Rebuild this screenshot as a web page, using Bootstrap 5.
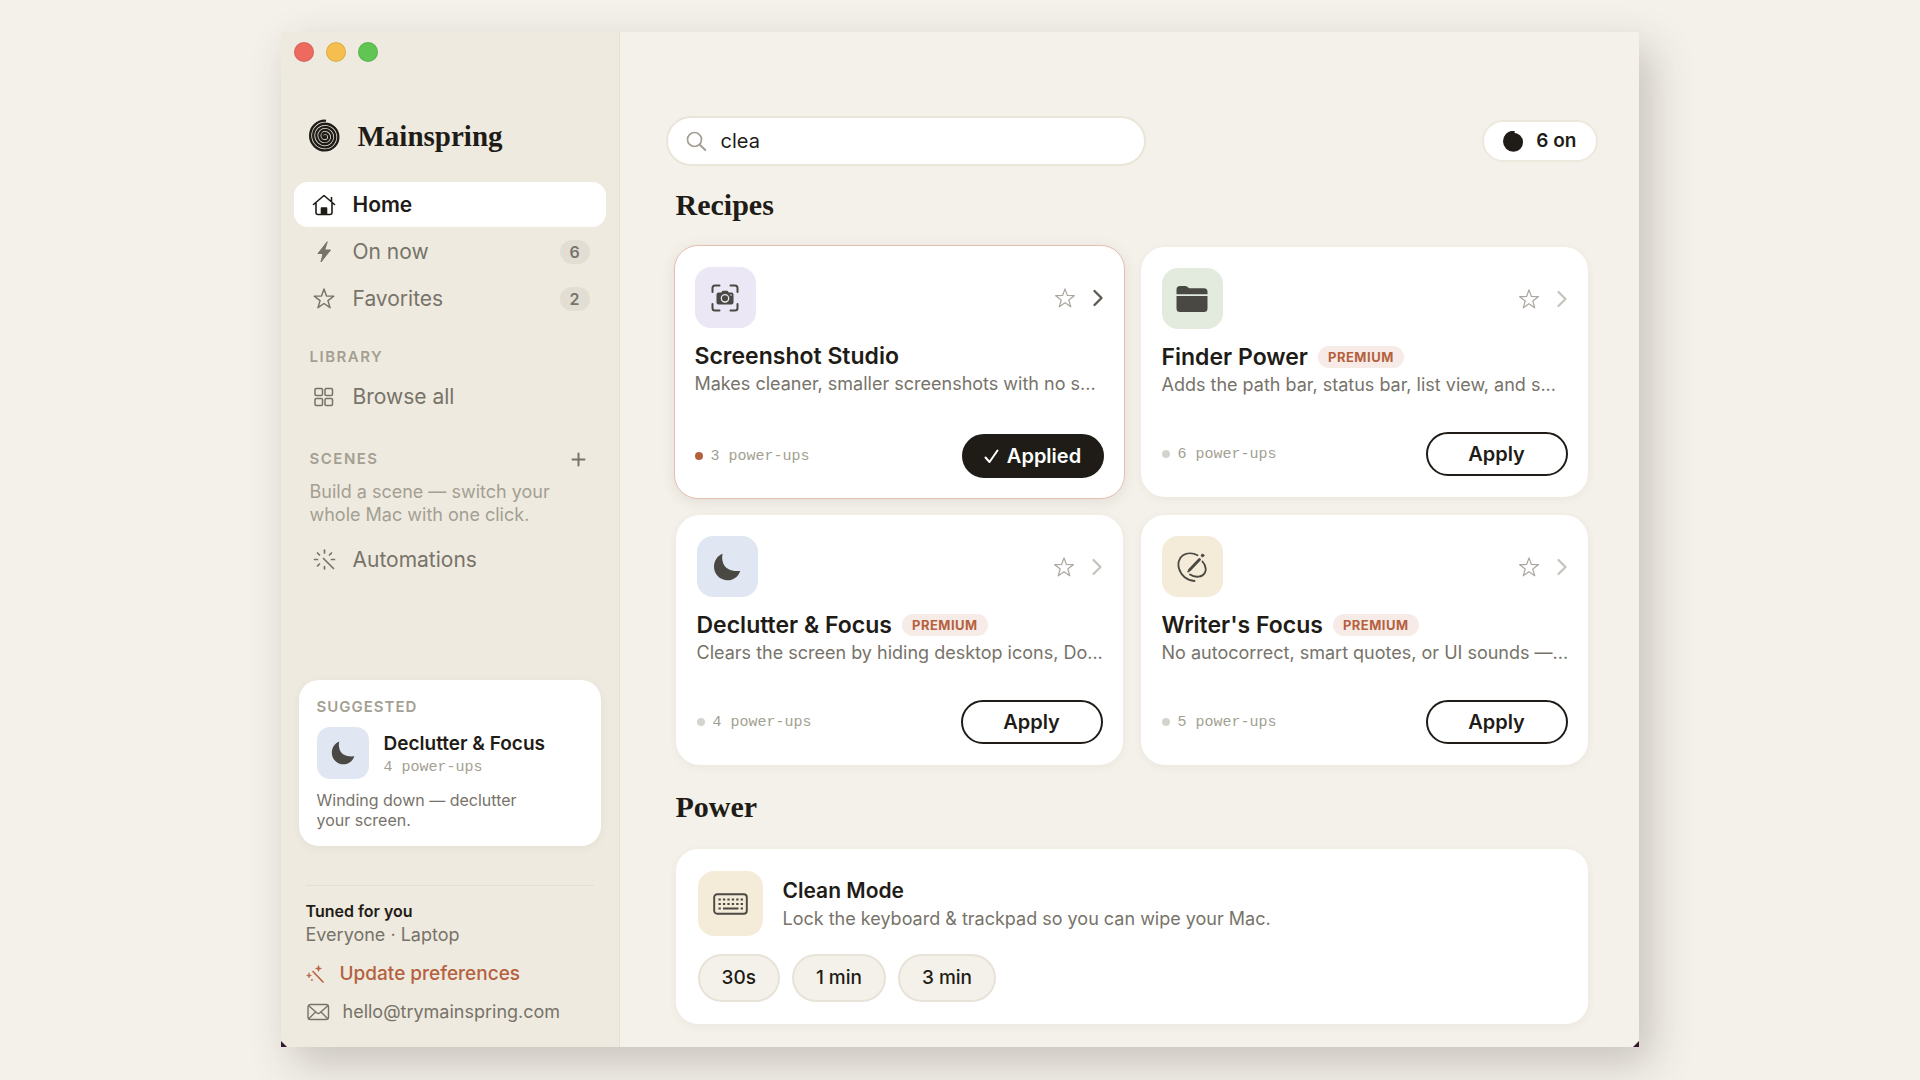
<!DOCTYPE html>
<html lang="en">
<head>
<meta charset="utf-8">
<meta name="viewport" content="width=device-width, initial-scale=1">
<title>Mainspring</title>
<link href="https://cdn.jsdelivr.net/npm/bootstrap@5.3.0/dist/css/bootstrap.min.css" rel="stylesheet">
<script src="https://cdn.jsdelivr.net/npm/bootstrap@5.3.0/dist/js/bootstrap.bundle.min.js"></script>
<style>
:root{--ink:#1f1c17;--soft:#77736a;--faint:#a39f92;--line:#e5e1d3;--paper:#f4f1ea;--side:#eeeadf;--rust:#b5613f}
body{background:var(--paper);color:var(--ink);font-family:Inter,"Liberation Sans",sans-serif;font-size:18px;line-height:26px;padding-right:1px}
button,input{font-family:inherit}
svg{display:block;flex:none;fill:none;stroke:currentColor;stroke-linecap:round;stroke-linejoin:round}
.app-window{max-width:1358px;margin:32px auto 33px;background:var(--paper);box-shadow:12px 16px 40px rgba(60,52,40,.24)}
.app-window::before,.app-window::after{content:"";position:absolute;bottom:0;border:3px solid transparent;border-bottom-color:#35182f}
.app-window::before{left:0;border-left-color:#35182f}
.app-window::after{right:0;border-right-color:#35182f}
.side-pane{width:339px;flex:none;background:var(--side);border-right:1px solid var(--line);padding:10px 13px 22px 13px}
.light-row{gap:12px}
.light-dot{width:20px;height:20px;border-radius:50%;border:1px solid rgba(0,0,0,.1)}
.light-red{background:#ee6a5f}.light-amber{background:#f5bf4f}.light-green{background:#61c554}
.serif-face{font-family:"Liberation Serif",serif;font-weight:700;line-height:36px}
.brand-name{font-size:29px}
.brand-row{padding-left:14px;margin-top:56px;gap:16px}
.section-title{font-size:30px;margin:0}
.side-nav{gap:2px;margin-top:28px}
.side-link{height:45px;border-radius:14px;padding:0 16px;gap:15px;color:var(--soft);font-size:21px;text-decoration:none}
.side-link svg{width:28px}
.side-link.current{background:#fff;color:var(--ink);font-weight:600}
.count-pill{width:30px;height:24px;border-radius:12px;background:#e2ded3;font-size:16px;font-weight:600;line-height:24px;text-align:center}
.caps-label{font-size:15px;line-height:20px;font-weight:600;letter-spacing:1.5px;color:var(--faint)}
.caps-tight{letter-spacing:1px}
.side-section{padding:0 16px}
.plain-btn{background:none;border:0;padding:0;color:var(--soft)}
.hint-text{font-size:18px;line-height:23px;color:var(--faint);white-space:nowrap}
.suggest-box{background:#fff;border-radius:20px;padding:17px 18px 16px;margin:0 5px;box-shadow:0 2px 8px rgba(80,70,50,.06)}
.mono-text{font-family:"Liberation Mono",monospace;font-size:15px;line-height:22px;color:var(--faint)}
.recipe .mono-text{padding-top:2px}
.tile{display:flex;align-items:center;justify-content:center;flex:none;width:61px;height:61px;border-radius:16px;color:#4a4842}
.tile-sm{width:52px;height:52px;border-radius:13px}
.tile-lg{width:65px;height:65px}
.tint-violet{background:#ebe7f4}.tint-green{background:#e3ebdf}.tint-blue{background:#e0e7f2}.tint-sand{background:#f4ebd9}
.tuned-box{border-top:1px solid #e3dfd4;margin:39px 12px 0;padding-top:13px}
.rust-link{color:var(--rust);font-size:19px;font-weight:500;text-decoration:none}
.mail-link{color:var(--soft);text-decoration:none}
.main-pane{min-width:0;padding:84px 41px 23px 46px}
.search-box{width:480px;height:50px;border-radius:25px;border:2px solid #e9e5d9;background:#fff;padding:0 18px;gap:14px;color:var(--faint)}
.search-box input{border:0;outline:0;background:none;font-size:20px;color:var(--ink)}
.on-pill{height:42px;border-radius:21px;border:2px solid #ece8dd;background:#fff;padding:0 19px;gap:12px;font-size:19px;font-weight:600;color:var(--ink)}
.recipe-grid{display:grid;grid-template-columns:repeat(2,minmax(0,1fr));gap:18px}
.recipe{min-height:250px;background:#fff;border-radius:24px;padding:21px 20px 21px 21px;box-shadow:0 2px 8px rgba(80,70,50,.06)}
.recipe.active{margin:-2px;border:1px solid #e3bfb1;padding:21px 20px 20px;box-shadow:0 3px 14px rgba(80,70,50,.1)}
.recipe-name{font-size:23px;line-height:30px;font-weight:600;margin:0}
.name-row{gap:10px;margin-top:13px}
.recipe-tools,.recipe-tools .plain-btn{color:#aaa69d}
.recipe.active .go{color:#5f5b53}
.recipe:not(.active) .go{color:#c6c3bc}
.premium-tag{font-size:13px;line-height:22px;font-weight:700;letter-spacing:.5px;color:var(--rust);background:#f6ebe6;border-radius:11px;padding:0 10px}
.desc-text{color:var(--soft);font-size:18px;line-height:26px}
.recipe .desc-text{white-space:nowrap}
.state-dot{width:8px;height:8px;border-radius:50%;background:#d5d3cd}
.active .state-dot{background:var(--rust)}
.apply-btn{width:142px;height:44px;border-radius:22px;border:2px solid var(--ink);background:#fff;color:var(--ink);font-size:20px;font-weight:600;gap:8px}
.active .apply-btn{background:var(--ink);color:#fff}
.power-box{background:#fff;border-radius:22px;padding:22px;box-shadow:0 2px 8px rgba(80,70,50,.06)}
.time-btn{height:48px;border-radius:24px;border:2px solid #e7e3d8;background:#f4f1ea;color:var(--ink);font-size:19px;font-weight:500;padding:0 22px}
</style>
</head>
<body>
<svg width="0" height="0" class="position-absolute" aria-hidden="true">
  <symbol id="spiral" viewBox="0 0 32 32"><path d="M16 1.6A14 14 0 0 0 16 29.6A12.55 12.55 0 0 0 16 4.5A11.1 11.1 0 0 0 16 26.7A9.65 9.65 0 0 0 16 7.4A8.2 8.2 0 0 0 16 23.8A6.75 6.75 0 0 0 16 10.3A5.3 5.3 0 0 0 16 20.9A3.85 3.85 0 0 0 16 13.2A2.4 2.4 0 0 0 16 18A1 1 0 0 0 16 16"/></symbol>
  <symbol id="star" viewBox="0 0 24 24"><path d="M12 2l2.6 7.3 7.6.2-6.1 4.7 2.2 7.4L12 17.2l-6.300 4.400 2.200-7.400-6.100-4.700 7.600-.2z"/></symbol>
  <symbol id="chevron" viewBox="0 0 12 18"><path d="M2.500 2l7 7-7 7"/></symbol>
  <symbol id="moon" viewBox="0 0 28 28"><path fill="currentColor" stroke="none" d="M9.700.7C8.900 3 8.900 7 10.300 10.500C12.500 16 18.500 18.700 27.200 17.900C25.500 23.500 20.500 27.200 14.500 27.200C7 27.200 1 21.300 1 13.800C1 7.700 4.500 2.600 9.700.7z"/></symbol>
</svg>

<div class="app-window d-flex position-relative">
  <aside class="side-pane d-flex flex-column">
    <div class="light-row d-flex"><span class="light-dot light-red"></span><span class="light-dot light-amber"></span><span class="light-dot light-green"></span></div>
    <div class="brand-row d-flex align-items-center">
      <svg width="34" height="34" stroke-width="2.200"><use href="#spiral"/></svg>
      <span class="serif-face brand-name">Mainspring</span>
    </div>
    <nav class="side-nav d-flex flex-column">
      <a href="#" class="side-link current d-flex align-items-center">
        <svg height="24" viewBox="0 0 28 24" stroke-width="1.600"><path d="M3.500 11.500L14 2.500l10.500 9M21.500 8.500V4.500M6 10v9.500q0 2 2 2h12q2 0 2-2V10"/><path d="M11.500 21v-6h5v6z" fill="currentColor"/></svg>Home</a>
      <a href="#" class="side-link d-flex align-items-center">
        <svg height="24" viewBox="0 0 28 24"><path fill="currentColor" stroke-width="1" d="M17 2L8 13.500h5L11 22l9.500-12h-5.500z"/></svg>On now<span class="count-pill ms-auto">6</span></a>
      <a href="#" class="side-link d-flex align-items-center">
        <svg height="23" stroke-width="1.500"><use href="#star"/></svg>Favorites<span class="count-pill ms-auto">2</span></a>
    </nav>
    <div class="side-section caps-label" style="margin-top:26px">LIBRARY</div>
    <a href="#" class="side-link d-flex align-items-center" style="margin-top:7px">
      <svg height="20" viewBox="0 0 28 20" stroke-width="1.500"><rect x="5" y="1.500" width="7.500" height="7" rx="1.200"/><rect x="15" y="1.500" width="7.500" height="7" rx="1.200"/><rect x="5" y="11.500" width="7.500" height="7" rx="1.200"/><rect x="15" y="11.500" width="7.500" height="7" rx="1.200"/></svg>Browse all</a>
    <div class="side-section d-flex align-items-center justify-content-between" style="margin-top:30px">
      <span class="caps-label">SCENES</span>
      <button class="plain-btn me-1" aria-label="Add scene"><svg width="15" height="15" viewBox="0 0 15 15" stroke-width="2"><path d="M7.500 1.500v12M1.500 7.500h12"/></svg></button>
    </div>
    <div class="side-section hint-text" style="margin-top:11px">Build a scene — switch your<br>whole Mac with one click.</div>
    <a href="#" class="side-link d-flex align-items-center" style="margin-top:11px">
      <svg height="24" viewBox="0 0 28 24" stroke-width="1.700"><path d="M14.500 2v3M14.500 18.500v2.500M4.500 11.500h3M21.500 11.500h3M7.500 5l2 2M21.500 5l-2 2M9.500 16l-2 2M13.500 10.500l10 10"/></svg>Automations</a>

    <section class="suggest-box mt-auto">
      <div class="caps-label caps-tight">SUGGESTED</div>
      <div class="d-flex align-items-center" style="gap:15px;margin-top:10px">
        <span class="tile tile-sm tint-blue"><svg width="24" height="24"><use href="#moon"/></svg></span>
        <div class="pt-1"><div class="fw-semibold text-nowrap" style="font-size:19px">Declutter &amp; Focus</div><div class="mono-text">4 power-ups</div></div>
      </div>
      <div class="desc-text" style="font-size:16px;line-height:20px;margin-top:11px">Winding down — declutter<br>your screen.</div>
    </section>

    <section class="tuned-box">
      <div class="fw-semibold" style="font-size:16px;line-height:24px">Tuned for you</div>
      <div class="desc-text" style="line-height:24px">Everyone · Laptop</div>
      <a href="#" class="rust-link d-flex align-items-center" style="gap:15px;margin-top:14px">
        <svg width="19" height="19" viewBox="0 0 19 19" stroke-width="1.600"><path d="M7 6.500l10 10.500"/><path fill="currentColor" stroke-width=".5" d="M12.500.500l.8 2.200 2.200.8-2.200.8-.8 2.200-.8-2.200-2.200-.8 2.200-.8zM3 8l.6 1.900 1.900.6-1.900.6L3 13l-.6-1.900-1.900-.6 1.900-.6zM5.500 14.500h1v1h-1z"/></svg>Update preferences</a>
      <a href="mailto:hello@trymainspring.com" class="mail-link d-flex align-items-center" style="gap:13px;margin-top:12px">
        <svg width="24" height="18" viewBox="0 0 24 18" stroke-width="1.400"><rect x="2" y="1.500" width="20.500" height="15" rx="2.500"/><path d="M3 3l8 7q1.300 1 2.600 0l8-7M3 15.500l6.500-6.500M21.500 15.500l-6.500-6.500"/></svg>hello@trymainspring.com</a>
    </section>
  </aside>

  <main class="main-pane flex-grow-1">
    <div class="d-flex align-items-center justify-content-between">
      <label class="search-box d-flex align-items-center">
        <svg width="21" height="21" viewBox="0 0 21 21" stroke-width="1.700"><circle cx="8.500" cy="8.500" r="7"/><path stroke-width="2" d="M13.800 13.800l5.500 5.200"/></svg>
        <input type="text" class="w-100 p-0" value="clea" aria-label="Search">
      </label>
      <button class="on-pill d-flex align-items-center"><svg width="21" height="21" stroke-width="4"><use href="#spiral"/></svg>6 on</button>
    </div>

    <div style="padding:0 10px">
      <h2 class="serif-face section-title" style="margin-top:21px">Recipes</h2>
      <div class="recipe-grid" style="margin-top:24px">
        <article class="recipe active d-flex flex-column">
          <div class="d-flex align-items-center justify-content-between">
            <span class="tile tint-violet"><svg width="28" height="28" viewBox="0 0 28 28" stroke-width="2"><path d="M1.500 8V4q0-2.500 2.500-2.500h4.500M19.500 1.500H24q2.500 0 2.500 2.500v4M26.500 20v4q0 2.500-2.500 2.500h-4.500M8.500 26.500H4q-2.500 0-2.500-2.500v-4"/><path fill="currentColor" stroke="none" d="M7.500 8.500h2.700l1.300-1.700h5l1.300 1.700h2.700q2 0 2 2v8q0 2-2 2h-13q-2 0-2-2v-8q0-2 2-2z"/><circle cx="14" cy="14.300" r="3.700" stroke="#ebe7f4" stroke-width="1.300"/><circle cx="20" cy="11" r=".8" fill="#ebe7f4" stroke="none"/></svg></span>
            <span class="recipe-tools d-flex align-items-center gap-3"><button class="plain-btn" aria-label="Favorite"><svg width="22" height="22" stroke-width="1.300"><use href="#star"/></svg></button><svg class="go" width="12" height="18" stroke-width="2.400"><use href="#chevron"/></svg></span>
          </div>
          <div class="name-row d-flex align-items-center"><h3 class="recipe-name">Screenshot Studio</h3></div>
          <div class="desc-text">Makes cleaner, smaller screenshots with no s...</div>
          <div class="d-flex align-items-center mt-auto"><span class="state-dot me-2"></span><span class="mono-text">3 power-ups</span>
            <button class="apply-btn ms-auto d-flex align-items-center justify-content-center"><svg width="15" height="15" viewBox="0 0 15 15" stroke-width="2"><path d="M1.500 8.500l4 4.500 8-11.500"/></svg>Applied</button></div>
        </article>

        <article class="recipe d-flex flex-column">
          <div class="d-flex align-items-center justify-content-between">
            <span class="tile tint-green"><svg width="32" height="28" viewBox="0 0 32 28"><path fill="currentColor" stroke="none" d="M.5 9.200V4.500q0-3.500 3.500-3.500h5q1.500 0 2.600 1l1.600 1.300H28q3.500 0 3.500 3.500v2.400zM.5 11h31v12.500q0 3.500-3.500 3.500H4q-3.500 0-3.500-3.500z"/></svg></span>
            <span class="recipe-tools d-flex align-items-center gap-3"><button class="plain-btn" aria-label="Favorite"><svg width="22" height="22" stroke-width="1.300"><use href="#star"/></svg></button><svg class="go" width="12" height="18" stroke-width="2.200"><use href="#chevron"/></svg></span>
          </div>
          <div class="name-row d-flex align-items-center"><h3 class="recipe-name">Finder Power</h3><span class="premium-tag">PREMIUM</span></div>
          <div class="desc-text">Adds the path bar, status bar, list view, and s...</div>
          <div class="d-flex align-items-center mt-auto"><span class="state-dot me-2"></span><span class="mono-text">6 power-ups</span><button class="apply-btn ms-auto">Apply</button></div>
        </article>

        <article class="recipe d-flex flex-column">
          <div class="d-flex align-items-center justify-content-between">
            <span class="tile tint-blue"><svg width="28" height="28"><use href="#moon"/></svg></span>
            <span class="recipe-tools d-flex align-items-center gap-3"><button class="plain-btn" aria-label="Favorite"><svg width="22" height="22" stroke-width="1.300"><use href="#star"/></svg></button><svg class="go" width="12" height="18" stroke-width="2.200"><use href="#chevron"/></svg></span>
          </div>
          <div class="name-row d-flex align-items-center"><h3 class="recipe-name">Declutter &amp; Focus</h3><span class="premium-tag">PREMIUM</span></div>
          <div class="desc-text">Clears the screen by hiding desktop icons, Do...</div>
          <div class="d-flex align-items-center mt-auto"><span class="state-dot me-2"></span><span class="mono-text">4 power-ups</span><button class="apply-btn ms-auto">Apply</button></div>
        </article>

        <article class="recipe d-flex flex-column">
          <div class="d-flex align-items-center justify-content-between">
            <span class="tile tint-sand"><svg width="30" height="30" viewBox="0 0 30 30" stroke-width="1.800"><path d="M20.500 3.200C16 .9 10 .8 6 3.200C1.500 6 .7 12 2 16.500C4 23.500 10 28.500 17.500 29M25.500 9.500C28.500 13 29.300 17.500 28 20.500C25.500 25.500 18 26 13 22.500"/><path stroke-width="2.800" d="M22.500 7.500L12.500 18"/><path stroke-width="1.600" d="M12.500 18l-1.500 1.700"/><circle cx="25.600" cy="3.500" r="1.300" fill="currentColor" stroke-width="1"/></svg></span>
            <span class="recipe-tools d-flex align-items-center gap-3"><button class="plain-btn" aria-label="Favorite"><svg width="22" height="22" stroke-width="1.300"><use href="#star"/></svg></button><svg class="go" width="12" height="18" stroke-width="2.200"><use href="#chevron"/></svg></span>
          </div>
          <div class="name-row d-flex align-items-center"><h3 class="recipe-name">Writer's Focus</h3><span class="premium-tag">PREMIUM</span></div>
          <div class="desc-text">No autocorrect, smart quotes, or UI sounds —...</div>
          <div class="d-flex align-items-center mt-auto"><span class="state-dot me-2"></span><span class="mono-text">5 power-ups</span><button class="apply-btn ms-auto">Apply</button></div>
        </article>
      </div>

      <h2 class="serif-face section-title" style="margin-top:24px">Power</h2>
      <section class="power-box" style="margin-top:24px">
        <div class="d-flex align-items-center" style="gap:20px">
          <span class="tile tile-lg tint-sand"><svg width="35" height="22" viewBox="0 0 35 22" stroke-width="1.900"><rect x="1.200" y="1.200" width="32.600" height="19.600" rx="3"/><path stroke-linecap="butt" stroke-width="2.200" stroke-dasharray="2.300 2.130" d="M5.500 6.500h24.500M5.500 11h24.500"/><path stroke-linecap="butt" stroke-width="2.200" d="M5.500 15.500h2.300M10 15.500h15.500M27.700 15.500H30"/></svg></span>
          <div><h3 class="recipe-name" style="font-size:21px">Clean Mode</h3><div class="desc-text">Lock the keyboard &amp; trackpad so you can wipe your Mac.</div></div>
        </div>
        <div class="d-flex" style="gap:12px;margin-top:18px"><button class="time-btn">30s</button><button class="time-btn">1 min</button><button class="time-btn">3 min</button></div>
      </section>
    </div>
  </main>
</div>
</body>
</html>
